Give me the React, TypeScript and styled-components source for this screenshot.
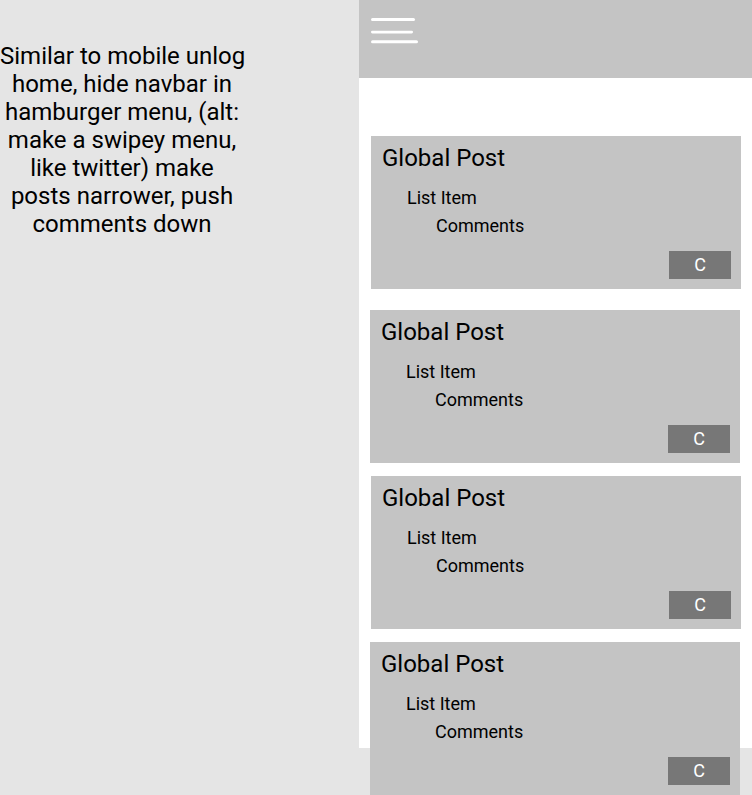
import React from "react";
import styled, { createGlobalStyle } from "styled-components";

const Global = createGlobalStyle`
  html, body {
    margin: 0;
    padding: 0;
    background: #e5e5e5;
    font-family: Roboto, "Liberation Sans", sans-serif;
    color: #000;
  }
`;

const Page = styled.div`
  display: flex;
  align-items: flex-start;
  width: 752px;
`;

const NoteColumn = styled.aside`
  width: 359px;
  flex: none;
  padding-top: 42px;
`;

const Note = styled.p`
  margin: 0;
  width: 244px;
  font-size: 24px;
  line-height: 28px;
  text-align: center;
  white-space: nowrap;
`;

/* the phone frame is 748px tall; the last post runs past its bottom edge */
const Phone = styled.main`
  width: 393px;
  flex: none;
  background: linear-gradient(to bottom, #ffffff 748px, transparent 748px);
  display: flex;
  flex-direction: column;
`;

const TopBar = styled.header`
  height: 78px;
  flex: none;
  background: #c4c4c4;
  box-sizing: border-box;
  padding: 17px 0 0 12px;
`;

const MenuButton = styled.button`
  display: block;
  border: 0;
  padding: 0;
  background: transparent;
  width: 48px;
  height: 28px;
  cursor: pointer;
`;

const Feed = styled.section`
  display: flex;
  flex-direction: column;
  padding-top: 58px;
`;

const Card = styled.article<{ $inset: number; $gap: number }>`
  width: 370px;
  height: 153px;
  flex: none;
  box-sizing: border-box;
  margin-left: ${(p) => p.$inset}px;
  margin-top: ${(p) => p.$gap}px;
  background: #c4c4c4;
  padding: 8px 10px 10px 11px;
  display: flex;
  flex-direction: column;
`;

const Title = styled.h2`
  margin: 0 0 12px;
  font-size: 24px;
  line-height: 28px;
  font-weight: 400;
`;

const Item = styled.div<{ $indent: number }>`
  font-size: 18px;
  line-height: 28px;
  margin-left: ${(p) => p.$indent}px;
`;

const CommentButton = styled.button`
  align-self: flex-end;
  margin-top: auto;
  width: 62px;
  height: 28px;
  border: 0;
  padding: 0;
  background: #777777;
  color: #ffffff;
  font-family: Roboto, "Liberation Sans", sans-serif;
  font-size: 18px;
  line-height: 28px;
  cursor: pointer;
`;

const Hamburger = () => (
  <svg width="48" height="28" viewBox="0 0 48 28" aria-hidden="true">
    <rect x="0" y="1" width="44" height="3" rx="1.5" fill="#ffffff" />
    <rect x="0" y="13.7" width="42" height="2.7" rx="1.3" fill="#ffffff" />
    <rect x="0" y="23.3" width="47" height="3" rx="1.5" fill="#ffffff" />
  </svg>
);

const posts = [
  { inset: 12, gap: 0 },
  { inset: 11, gap: 21 },
  { inset: 12, gap: 13 },
  { inset: 11, gap: 13 },
];

export default function App() {
  return (
    <>
      <Global />
      <Page>
        <NoteColumn>
          <Note>
            Similar to mobile unlog
            <br />
            home, hide navbar in
            <br />
            hamburger menu, (alt:
            <br />
            make a swipey menu,
            <br />
            like twitter) make
            <br />
            posts narrower, push
            <br />
            comments down
          </Note>
        </NoteColumn>
        <Phone>
          <TopBar>
            <MenuButton aria-label="Menu">
              <Hamburger />
            </MenuButton>
          </TopBar>
          <Feed>
            {posts.map((p, i) => (
              <Card key={i} $inset={p.inset} $gap={p.gap}>
                <Title>Global Post</Title>
                <Item $indent={25}>List Item</Item>
                <Item $indent={54}>Comments</Item>
                <CommentButton>C</CommentButton>
              </Card>
            ))}
          </Feed>
        </Phone>
      </Page>
    </>
  );
}
